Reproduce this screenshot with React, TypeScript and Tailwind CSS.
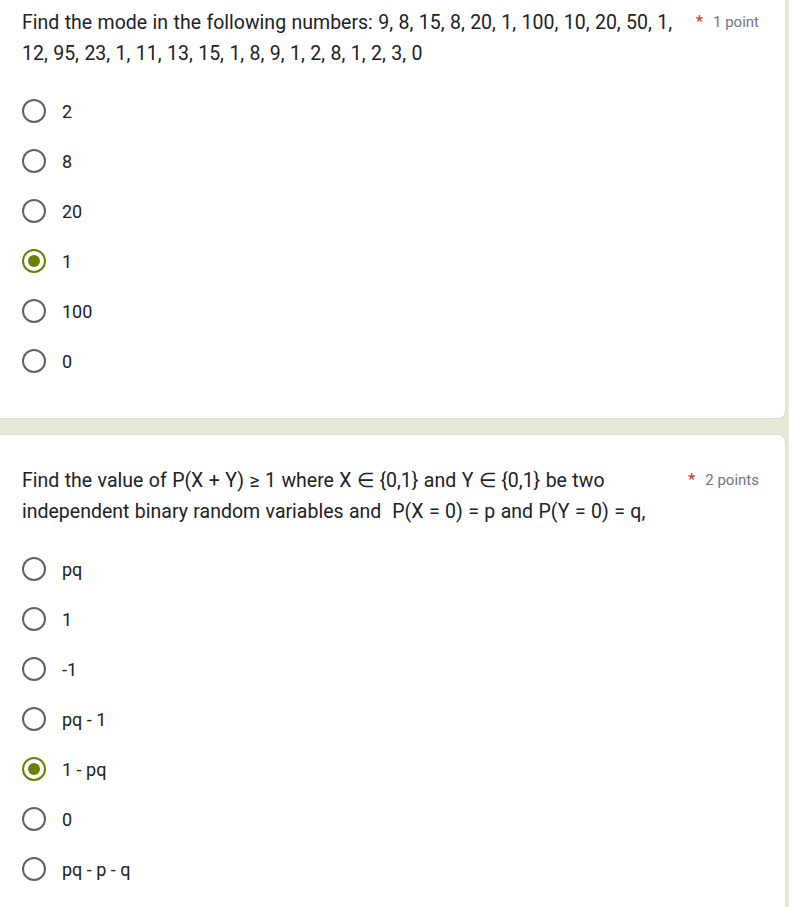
import React from 'react';

type Question = {
  title: string;
  points: string;
  options: string[];
  selected: number;
};

const questions: Question[] = [
  {
    title:
      'Find the mode in the following numbers: 9, 8, 15, 8, 20, 1, 100, 10, 20, 50, 1, 12, 95, 23, 1, 11, 13, 15, 1, 8, 9, 1, 2, 8, 1, 2, 3, 0',
    points: '1 point',
    options: ['2', '8', '20', '1', '100', '0'],
    selected: 3,
  },
  {
    title:
      'Find the value of P(X + Y) \u2265 1 where X \u2208 {0,1} and Y \u2208 {0,1} be two independent binary random variables and\u00a0 P(X = 0) = p and P(Y = 0) = q,',
    points: '2 points',
    options: ['pq', '1', '-1', 'pq - 1', '1 - pq', '0', 'pq - p - q'],
    selected: 4,
  },
];

function Radio({ checked }: { checked: boolean }) {
  if (checked) {
    return (
      <span className="w-6 h-6 rounded-full border-2 border-[#6a7f00] flex items-center justify-center shrink-0">
        <span className="w-3 h-3 rounded-full bg-[#6a7f00]" />
      </span>
    );
  }
  return <span className="w-6 h-6 rounded-full border-2 border-[#5f6368] shrink-0" />;
}

function QuestionBody({ q }: { q: Question }) {
  return (
    <>
      <div className="flex items-start pl-[22px] pr-[26px]">
        <div className="flex-1 text-[19.5px] leading-[31px] text-[#202124] [word-spacing:0.6px]">{q.title}</div>
        <div className="shrink-0 pl-[12px] flex items-center h-[31px] text-[15px] text-[#70757a]">
          <span className="text-[#d93025] text-[17px] mr-[10px] relative top-[-1px]">*</span>
          {q.points}
        </div>
      </div>
      <div className="mt-[17px] flex flex-col">
        {q.options.map((opt, i) => (
          <div key={i} className="h-[50px] flex items-center pl-[22px]">
            <Radio checked={i === q.selected} />
            <span className="ml-[16px] text-[18px] text-[#202124]">{opt}</span>
          </div>
        ))}
      </div>
    </>
  );
}

export default function App() {
  return (
    <div
      className="min-h-screen bg-[#e6e9d3] pr-[3px]"
      style={{ fontFamily: 'Roboto, "Liberation Sans", sans-serif' }}
    >
      <div className="bg-white border-b border-r border-[#dadce0] rounded-br-lg pt-[7px] pb-[32px]">
        <QuestionBody q={questions[0]} />
      </div>
      <div className="h-[15px]" />
      <div className="bg-white border-t border-r border-[#dadce0] rounded-tr-lg pt-[30px] pb-[20px]">
        <QuestionBody q={questions[1]} />
      </div>
    </div>
  );
}
